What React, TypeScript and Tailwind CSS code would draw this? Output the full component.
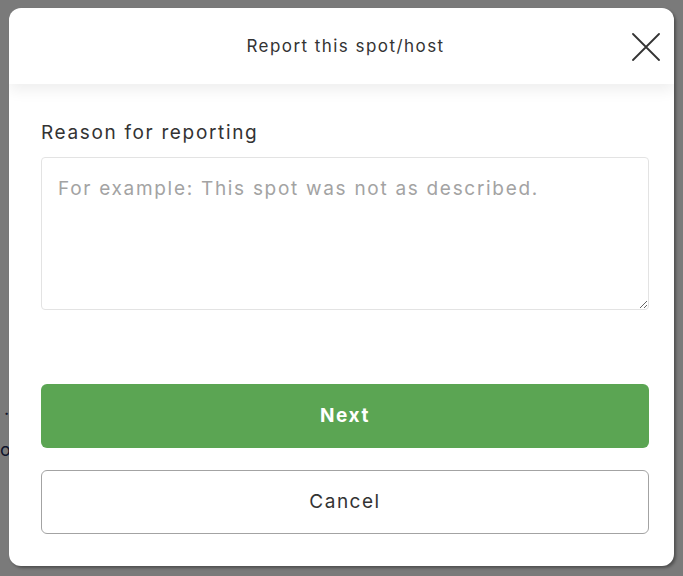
import React from 'react';

const FONT = { fontFamily: 'Inter, "Open Sans", "Liberation Sans", sans-serif' };

function CloseIcon() {
  return (
    <svg width="28" height="28" viewBox="0 0 28 28" fill="none" aria-hidden>
      <path d="M1 1L27 27M27 1L1 27" stroke="#333333" strokeWidth="1.8" strokeLinecap="round" />
    </svg>
  );
}

export default function App() {
  return (
    <div className="relative w-[683px] h-[576px] overflow-hidden bg-white" style={FONT}>
      {/* page behind the overlay */}
      <div className="pt-[396px] pl-[4px] text-[#1f2d5a] text-[18px] leading-[36px]">
        <div>·</div>
        <div className="-ml-[4px]">o</div>
      </div>

      <div className="absolute inset-0 bg-black/[0.52] pt-[8px] pl-[9px]">
        <div className="w-[665px] h-[558px] bg-white rounded-[12px] shadow-[2px_2px_3px_rgba(0,0,0,0.35)] flex flex-col overflow-hidden">
          <div className="relative h-[76px] shrink-0 flex items-center justify-center pt-[1px] pl-[8px] shadow-[0_6px_14px_rgba(0,0,0,0.07)] z-10">
            <span className="text-[17px] text-[#333333] tracking-[1.45px]">Report this spot/host</span>
            <button type="button" className="absolute right-[14px] top-[25px]">
              <CloseIcon />
            </button>
          </div>

          <div className="flex flex-col pl-[32px] pr-[25px] pt-[37px]">
            <label className="text-[19px] text-[#333333] leading-[24px] tracking-[1.65px]">Reason for reporting</label>
            <textarea
              className="mt-[12px] h-[153px] w-full resize-y rounded-[4px] border border-[#e3e3e3] px-[16px] pt-[18px] pb-[16px] text-[19px] leading-[26px] text-[#333333] placeholder:text-[#a3a3a3] outline-none tracking-[1.7px]"
              placeholder="For example: This spot was not as described."
            />

            <button
              type="button"
              className="mt-[74px] h-[64px] w-full rounded-[6px] bg-[#5ba553] text-white text-[19px] font-bold tracking-[1.6px]"
            >
              Next
            </button>
            <button
              type="button"
              className="mt-[22px] h-[64px] w-full rounded-[6px] border border-[#a3a3a3] bg-white text-[#333333] text-[19px] font-normal tracking-[1.5px]"
            >
              Cancel
            </button>
          </div>
        </div>
      </div>
    </div>
  );
}
